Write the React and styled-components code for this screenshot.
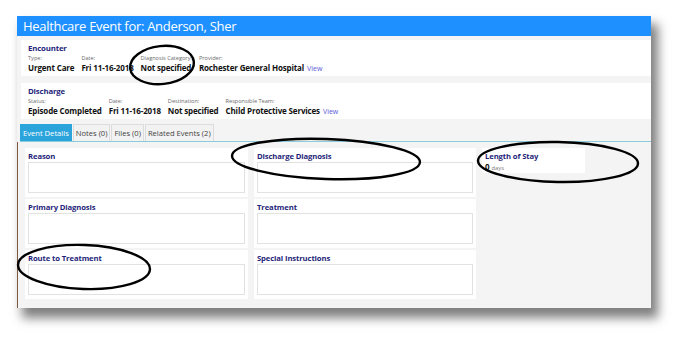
import React from "react";
import styled, { createGlobalStyle } from "styled-components";

const Global = createGlobalStyle`
  html, body { margin: 0; padding: 0; background: #ffffff; }
  body { font-family: "Open Sans", "Noto Sans", "DejaVu Sans", sans-serif; }
  * { box-sizing: border-box; }
`;

const Page = styled.div`
  position: relative;
  width: 688px;
  height: 345px;
  padding: 16px 0 0 17px;
  overflow: hidden;
`;

const Window = styled.div`
  width: 634px;
  height: 292px;
  background: #f4f4f4;
  box-shadow: 6px 9px 10px 1px rgba(0, 0, 0, 0.5);
  display: flex;
  flex-direction: column;
`;

const TitleBar = styled.div`
  height: 20px;
  background: #1e90ff;
  color: #ffffff;
  font-size: 13px;
  line-height: 20px;
  padding-left: 6px;
  letter-spacing: -0.3px;
  white-space: nowrap;
`;

const Summary = styled.section`
  margin: ${(p) => p.$top}px 0 0 4px;
  height: 36px;
  background: #ffffff;
  padding: 3px 0 0 7px;
`;

const SectionTitle = styled.div`
  color: #1f1f7a;
  font-weight: 700;
  font-size: 7.8px;
  letter-spacing: -0.15px;
  line-height: 11px;
`;

const Fields = styled.div`
  display: flex;
  gap: ${(p) => p.$gap || 6}px;
`;

const Field = styled.div`
  display: flex;
  flex-direction: column;
  white-space: nowrap;
`;

const Label = styled.div`
  color: #6a6a6a;
  font-size: 5.6px;
  line-height: 8px;
`;

const Value = styled.div`
  color: #111111;
  font-weight: 700;
  font-size: 8px;
  letter-spacing: -0.15px;
  line-height: 11px;
`;

const ViewLink = styled.span`
  color: #5a5ad8;
  font-weight: 400;
  font-size: 7px;
  letter-spacing: 0;
  margin-left: 3px;
`;

const TabBar = styled.div`
  margin: 5px 0 0 3px;
  display: flex;
  gap: 1px;
  border-bottom: 1px solid #8ccbd9;
  height: 18px;
`;

const Tab = styled.div`
  height: 17px;
  padding: 0 2px;
  font-size: 7.6px;
  line-height: 17px;
  white-space: nowrap;
  color: ${(p) => (p.$active ? "#ffffff" : "#444444")};
  background: ${(p) => (p.$active ? "#2ba4dc" : "#f2f2f2")};
  border: 1px solid ${(p) => (p.$active ? "#2ba4dc" : "#dcdcdc")};
  border-bottom: none;
`;

const Content = styled.div`
  flex: 1;
  border-left: 1px solid #7a5a40;
  padding: 6px 0 0 7px;
  display: grid;
  grid-template-columns: 223px 222px 103px;
  grid-template-rows: 49px 49px 49px;
  column-gap: 6px;
  row-gap: 2px;
  align-items: start;
`;

const Card = styled.div`
  background: #ffffff;
  height: ${(p) => (p.$short ? 25 : 49)}px;
  padding: 3px 3px 4px;
  display: flex;
  flex-direction: column;
`;

const CardTitle = styled.div`
  color: #1f1f7a;
  font-weight: 700;
  font-size: 7.7px;
  letter-spacing: -0.12px;
  line-height: 10px;
  white-space: nowrap;
  margin-bottom: 1px;
`;

const TextBox = styled.div`
  flex: 1;
  border: 1px solid #e2e2e2;
  background: #ffffff;
`;

const StayValue = styled.div`
  font-size: 8px;
  font-weight: 700;
  color: #111111;
  line-height: 10px;
`;

const StayUnit = styled.span`
  color: #777777;
  font-weight: 400;
  font-size: 5.8px;
  margin-left: 2px;
`;

const Annotations = styled.svg`
  position: absolute;
  left: 0;
  top: 0;
  pointer-events: none;
`;

function SummaryBlock({ top, title, gap, fields, view }) {
  return (
    <Summary $top={top}>
      <SectionTitle>{title}</SectionTitle>
      <Fields $gap={gap}>
        {fields.map((f, i) => (
          <Field key={f.label}>
            <Label>{f.label}</Label>
            <Value>
              {f.value}
              {view && i === fields.length - 1 && <ViewLink>View</ViewLink>}
            </Value>
          </Field>
        ))}
      </Fields>
    </Summary>
  );
}

function Box({ title }) {
  return (
    <Card>
      <CardTitle>{title}</CardTitle>
      <TextBox />
    </Card>
  );
}

export default function App() {
  return (
    <>
      <Global />
      <Page>
        <Window>
          <TitleBar>Healthcare Event for: Anderson, Sher</TitleBar>
          <SummaryBlock
            top={4}
            title="Encounter"
            gap={7}
            view
            fields={[
              { label: "Type:", value: "Urgent Care" },
              { label: "Date:", value: "Fri 11-16-2018" },
              { label: "Diagnosis Category:", value: "Not specified" },
              { label: "Provider:", value: "Rochester General Hospital" },
            ]}
          />
          <SummaryBlock
            top={7}
            title="Discharge"
            gap={7}
            view
            fields={[
              { label: "Status:", value: "Episode Completed" },
              { label: "Date:", value: "Fri 11-16-2018" },
              { label: "Destination:", value: "Not specified" },
              { label: "Responsible Team:", value: "Child Protective Services" },
            ]}
          />
          <TabBar>
            <Tab $active>Event Details</Tab>
            <Tab>Notes (0)</Tab>
            <Tab>Files (0)</Tab>
            <Tab>Related Events (2)</Tab>
          </TabBar>
          <Content>
            <Box title="Reason" />
            <Box title="Discharge Diagnosis" />
            <Card $short>
              <CardTitle>Length of Stay</CardTitle>
              <StayValue>
                0<StayUnit>days</StayUnit>
              </StayValue>
            </Card>
            <Box title="Primary Diagnosis" />
            <Box title="Treatment" />
            <div />
            <Box title="Route to Treatment" />
            <Box title="Special Instructions" />
          </Content>
        </Window>
        <Annotations width="688" height="345" viewBox="0 0 688 345">
          <g fill="none" stroke="#000" strokeWidth="2.4">
            <ellipse cx="162" cy="65" rx="32" ry="19" transform="rotate(-6 162 65)" />
            <ellipse cx="326" cy="159" rx="94" ry="20" transform="rotate(2 326 159)" />
            <ellipse cx="558" cy="162" rx="80" ry="20" transform="rotate(1 558 162)" />
            <ellipse cx="84" cy="267" rx="66" ry="22" transform="rotate(2 84 267)" />
          </g>
        </Annotations>
      </Page>
    </>
  );
}
